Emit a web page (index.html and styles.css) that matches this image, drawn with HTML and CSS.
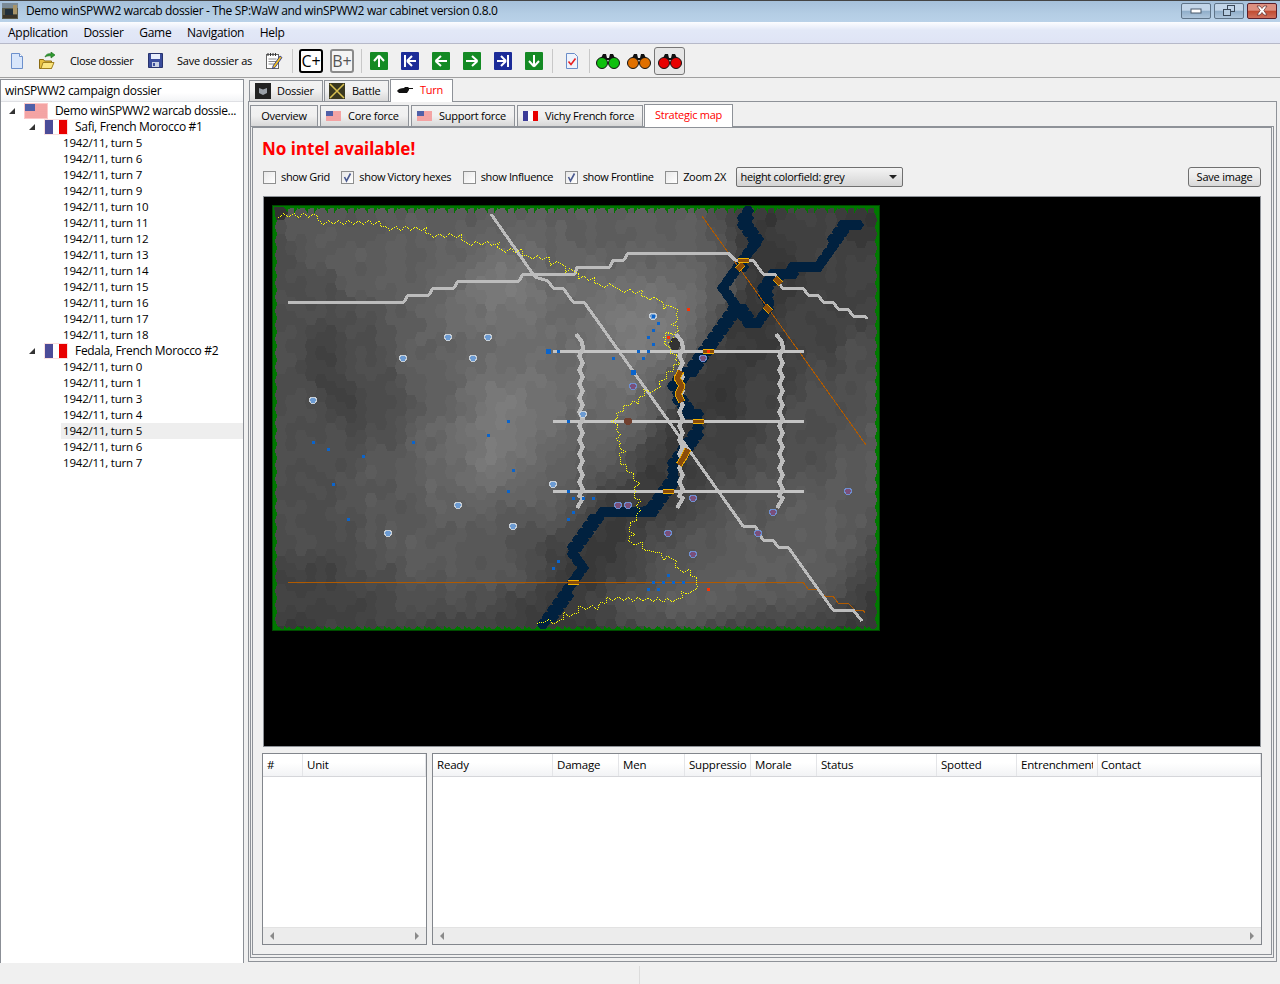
FILE: index.html
```html
<!DOCTYPE html>
<html lang="en">
<head>
<meta charset="utf-8">
<title>Demo winSPWW2 warcab dossier</title>
<link rel="stylesheet" href="styles.css">
</head>
<body>
<div class="window">
  <header class="titlebar">
    <svg class="app-icon" width="16" height="16" viewBox="0 0 16 16"><rect width="16" height="16" fill="#5a5a48"/><rect y="0" width="16" height="5" fill="#7a8a96"/><rect x="3" y="6" width="8" height="6" fill="#22303a"/><rect x="11" y="2" width="4" height="9" fill="#a89468"/><rect x="1" y="12" width="14" height="3" fill="#3a3428"/></svg>
    <span class="title-text">Demo winSPWW2 warcab dossier - The SP:WaW and winSPWW2 war cabinet version 0.8.0</span>
    <div class="win-buttons">
      <span class="win-btn"><svg width="12" height="6" viewBox="0 0 12 6"><rect x="1" y="1" width="10" height="4" fill="#fff" stroke="#48586a"/></svg></span>
      <span class="win-btn"><svg width="14" height="12" viewBox="0 0 14 12"><rect x="5.5" y="0.5" width="7" height="6" fill="none" stroke="#3a4858"/><rect x="1.5" y="4.5" width="7" height="6" fill="#b6cce0" stroke="#3a4858"/></svg></span>
      <span class="win-btn win-close"><svg width="14" height="11" viewBox="0 0 14 11"><path d="M2 1h3l2 2.500L9 1h3L8.800 5.500 12 10H9L7 7.500 5 10H2l3.200-4.500z" fill="#fff" stroke="#5a2a2a" stroke-width=".7"/></svg></span>
    </div>
  </header>
  <nav class="menubar">
    <span class="menu-item">Application</span>
    <span class="menu-item">Dossier</span>
    <span class="menu-item">Game</span>
    <span class="menu-item">Navigation</span>
    <span class="menu-item">Help</span>
  </nav>
  <div class="toolbar">
    <span class="tool tool-new"><svg width="14" height="16" viewBox="0 0 14 16"><path d="M1.500.5h8l3 3v12h-11z" fill="#d8e6fb" stroke="#6c90cc"/><path d="M9.500.5v3h3" fill="#fff" stroke="#6c90cc"/></svg></span>
    <span class="tool tool-open"><svg width="18" height="18" viewBox="0 0 18 18"><path d="M1.500 7.500h4l1 1.500h7v7.500h-12z" fill="#e8c040" stroke="#8a6a10"/><path d="M3 16.500l2-6h11l-2.500 6z" fill="#fbe680" stroke="#a08020"/><path d="M7 5c1-3 4-4 6-3V0l4 3-4 3V4c-2-.5-4 0-6 1z" fill="#2e9a30" stroke="#176a1a" stroke-width=".6"/></svg></span>
    <span class="tool-text tool-close-text">Close dossier</span>
    <span class="tool tool-save"><svg width="15" height="15" viewBox="0 0 15 15"><path d="M.5.500h14v14h-14z" fill="#3a4c9c" stroke="#28346e"/><rect x="3" y="1" width="9" height="5" fill="#e8eefc"/><rect x="4" y="9" width="7" height="5" fill="#c8d0e4"/><rect x="5" y="10" width="2" height="3" fill="#3a4c9c"/></svg></span>
    <span class="tool-text tool-saveas-text">Save dossier as</span>
    <span class="tool tool-edit"><svg width="18" height="18" viewBox="0 0 18 18"><rect x="1.500" y="2.500" width="12" height="14" fill="#fff" stroke="#666"/><path d="M3 1v3M5.500 1v3M8 1v3M10.500 1v3" stroke="#333"/><path d="M3.500 7h8M3.500 9.500h8M3.500 12h6" stroke="#8a8a8a"/><path d="M8 14l7-10 2 1.500L10 15.500l-2.500 1z" fill="#f0c020" stroke="#1a2a90" stroke-width=".8"/></svg></span>
    <span class="tool-sep sep-a"></span>
    <span class="key-btn key-c">C+</span>
    <span class="key-btn key-b">B+</span>
    <span class="tool-sep sep-b"></span>
    <span class="nav-icons">
      <svg width="18" height="18" viewBox="0 0 18 18"><rect width="18" height="18" rx="1" fill="#148a24"/><path d="M9 3.500l5 5.500M9 3.500L4 9M9 3.500V15" stroke="#fff" stroke-width="2" fill="none"/></svg>
      <svg width="18" height="18" viewBox="0 0 18 18"><rect width="18" height="18" rx="1" fill="#1c2c98"/><path d="M4 3v12M6 9h9M6 9l5-5M6 9l5 5" stroke="#fff" stroke-width="2" fill="none"/></svg>
      <svg width="18" height="18" viewBox="0 0 18 18"><rect width="18" height="18" rx="1" fill="#148a24"/><path d="M3.500 9H15M3.500 9L9 4M3.500 9L9 14" stroke="#fff" stroke-width="2" fill="none"/></svg>
      <svg width="18" height="18" viewBox="0 0 18 18"><rect width="18" height="18" rx="1" fill="#148a24"/><path d="M14.500 9H3M14.500 9L9 4M14.500 9L9 14" stroke="#fff" stroke-width="2" fill="none"/></svg>
      <svg width="18" height="18" viewBox="0 0 18 18"><rect width="18" height="18" rx="1" fill="#1c2c98"/><path d="M14 3v12M12 9H3M12 9L7 4M12 9l-5 5" stroke="#fff" stroke-width="2" fill="none"/></svg>
      <svg width="18" height="18" viewBox="0 0 18 18"><rect width="18" height="18" rx="1" fill="#148a24"/><path d="M9 14.500L14 9M9 14.500L4 9M9 14.500V3" stroke="#fff" stroke-width="2" fill="none"/></svg>
    </span>
    <span class="tool-sep sep-c"></span>
    <span class="tool tool-report"><svg width="14" height="16" viewBox="0 0 14 16"><path d="M1.500.5h8l3 3v12h-11z" fill="#eef3fc" stroke="#6a8cc8"/><path d="M3.500 8.500l2.500 3 4.500-6" stroke="#e82020" stroke-width="1.600" fill="none"/></svg></span>
    <span class="tool-sep sep-d"></span>
    <span class="binos">
      <span class="bino"><svg width="24" height="16" viewBox="0 0 24 16"><path d="M4 7l3-6h3l1 4h2l1-4h3l3 6z" fill="#111"/><circle cx="6" cy="10" r="5.500" fill="#0ec00e" stroke="#111"/><circle cx="18" cy="10" r="5.500" fill="#0ec00e" stroke="#111"/></svg></span>
      <span class="bino"><svg width="24" height="16" viewBox="0 0 24 16"><path d="M4 7l3-6h3l1 4h2l1-4h3l3 6z" fill="#111"/><circle cx="6" cy="10" r="5.500" fill="#e07000" stroke="#111"/><circle cx="18" cy="10" r="5.500" fill="#e07000" stroke="#111"/></svg></span>
      <span class="bino bino-on"><svg width="24" height="16" viewBox="0 0 24 16"><path d="M4 7l3-6h3l1 4h2l1-4h3l3 6z" fill="#111"/><circle cx="6" cy="10" r="5.500" fill="#e80000" stroke="#111"/><circle cx="18" cy="10" r="5.500" fill="#e80000" stroke="#111"/></svg></span>
    </span>
  </div>

  <main class="workspace">
    <aside class="tree-panel">
      <div class="tree-head">winSPWW2 campaign dossier</div>
      <ul class="tree">
        <li class="row root"><i class="twist"></i>
          <svg class="flag-l" width="24" height="16" viewBox="0 0 24 16"><rect width="24" height="16" fill="#fcc8c8"/><rect x="1" y="1" width="22" height="14" fill="#fff"/><path d="M1 2h22M1 4h22M1 6h22M1 8h22M1 10h22M1 12h22M1 14h22" stroke="#e84848" stroke-width="1"/><rect x="1" y="1" width="10" height="7" fill="#5060a8"/></svg>
          <span>Demo winSPWW2 warcab dossie...</span></li>
        <li class="row mission"><i class="twist"></i>
          <svg class="flag-f" width="24" height="16" viewBox="0 0 24 16"><rect width="24" height="16" fill="#fbe0e0"/><rect x="1" y="1" width="8" height="14" fill="#4c4c98"/><rect x="9" y="1" width="6" height="14" fill="#fff"/><rect x="15" y="1" width="8" height="14" fill="#e80000"/></svg>
          <span>Safi, French Morocco #1</span></li>
        <li class="row leaf">1942/11, turn 5</li>
        <li class="row leaf">1942/11, turn 6</li>
        <li class="row leaf">1942/11, turn 7</li>
        <li class="row leaf">1942/11, turn 9</li>
        <li class="row leaf">1942/11, turn 10</li>
        <li class="row leaf">1942/11, turn 11</li>
        <li class="row leaf">1942/11, turn 12</li>
        <li class="row leaf">1942/11, turn 13</li>
        <li class="row leaf">1942/11, turn 14</li>
        <li class="row leaf">1942/11, turn 15</li>
        <li class="row leaf">1942/11, turn 16</li>
        <li class="row leaf">1942/11, turn 17</li>
        <li class="row leaf">1942/11, turn 18</li>
        <li class="row mission"><i class="twist"></i>
          <svg class="flag-f" width="24" height="16" viewBox="0 0 24 16"><rect width="24" height="16" fill="#fbe0e0"/><rect x="1" y="1" width="8" height="14" fill="#4c4c98"/><rect x="9" y="1" width="6" height="14" fill="#fff"/><rect x="15" y="1" width="8" height="14" fill="#e80000"/></svg>
          <span>Fedala, French Morocco #2</span></li>
        <li class="row leaf">1942/11, turn 0</li>
        <li class="row leaf">1942/11, turn 1</li>
        <li class="row leaf">1942/11, turn 3</li>
        <li class="row leaf">1942/11, turn 4</li>
        <li class="row leaf current"><span>1942/11, turn 5</span></li>
        <li class="row leaf">1942/11, turn 6</li>
        <li class="row leaf">1942/11, turn 7</li>
      </ul>
    </aside>

    <section class="right-col">
      <div class="tabs outer-tabs">
        <span class="tab tab-dossier"><svg width="16" height="16" viewBox="0 0 16 16"><rect width="16" height="16" fill="#222"/><path d="M4 5l4 1.500L12 5v5l-4 2-4-2z" fill="#9aa0a8"/></svg>Dossier</span>
        <span class="tab tab-battle"><svg width="16" height="16" viewBox="0 0 16 16"><rect width="16" height="16" fill="#3a3820"/><path d="M1 1l14 14M15 1L1 15" stroke="#d8c050" stroke-width="1.500"/></svg>Battle</span>
        <span class="tab tab-turn active"><svg width="16" height="8" viewBox="0 0 16 8"><path d="M0 5c1-2 4-3 7-3l1-1h3l1 1h4v1h-4v1l-2 3H2z" fill="#111"/></svg>Turn</span>
      </div>
      <div class="outer-pane">
        <div class="tabs inner-tabs">
          <span class="tab tab-overview">Overview</span>
          <span class="tab tab-core"><svg width="15" height="10" viewBox="0 0 15 10"><rect width="15" height="10" fill="#fff"/><path d="M0 1h15M0 3h15M0 5h15M0 7h15M0 9h15" stroke="#e84848"/><rect width="7" height="5" fill="#5060a8"/></svg>Core force</span>
          <span class="tab tab-support"><svg width="15" height="10" viewBox="0 0 15 10"><rect width="15" height="10" fill="#fff"/><path d="M0 1h15M0 3h15M0 5h15M0 7h15M0 9h15" stroke="#e84848"/><rect width="7" height="5" fill="#5060a8"/></svg>Support force</span>
          <span class="tab tab-vichy"><svg width="15" height="10" viewBox="0 0 15 10"><rect width="5" height="10" fill="#3c3c98"/><rect x="5" width="5" height="10" fill="#fff"/><rect x="10" width="5" height="10" fill="#e80000"/></svg>Vichy French force</span>
          <span class="tab tab-map active">Strategic map</span>
        </div>
        <div class="inner-pane">
          <div class="content">
            <h1 class="no-intel">No intel available!</h1>
            <div class="controls">
              <label class="check"><span class="box"></span>show Grid</label>
              <label class="check"><span class="box on"><svg width="11" height="11" viewBox="0 0 11 11"><path d="M2.500 5l2 4 4-7.500" fill="none" stroke="#4a5a90" stroke-width="1.600"/></svg></span>show Victory hexes</label>
              <label class="check"><span class="box"></span>show Influence</label>
              <label class="check"><span class="box on"><svg width="11" height="11" viewBox="0 0 11 11"><path d="M2.500 5l2 4 4-7.500" fill="none" stroke="#4a5a90" stroke-width="1.600"/></svg></span>show Frontline</label>
              <label class="check"><span class="box"></span>Zoom 2X</label>
              <span class="select">height colorfield: grey<i class="select-arrow"></i></span>
              <span class="button">Save image</span>
            </div>
            <div class="stage"><svg id="map" class="map" width="609" height="427" viewBox="272 205 609 427" shape-rendering="crispEdges"></svg></div>
            <div class="tables">
              <div class="table table-units">
                <div class="thead"><span class="th w-num">#</span><span class="th w-unit">Unit</span></div>
                <div class="tbody"></div>
                <div class="hscroll"><i class="arr-l"></i><i class="arr-r"></i></div>
              </div>
              <div class="table table-data">
                <div class="thead">
                  <span class="th w-ready">Ready</span><span class="th w-66">Damage</span><span class="th w-66">Men</span><span class="th w-66">Suppressio</span><span class="th w-66">Morale</span><span class="th w-status">Status</span><span class="th w-80">Spotted</span><span class="th w-entr">Entrenchment</span><span class="th w-contact">Contact</span>
                </div>
                <div class="tbody"></div>
                <div class="hscroll"><i class="arr-l"></i><i class="arr-r"></i></div>
              </div>
            </div>
          </div>
        </div>
      </div>
    </section>
  </main>
  <footer class="statusbar"><span class="status-sep"></span></footer>
</div>
<script src="map.js"></script>
</body>
</html>
```
FILE: styles.css
```css
* { box-sizing: border-box; }
html, body { margin: 0; padding: 0; }
body { width: 1280px; height: 984px; overflow: hidden; background: #f0f0f0; color: #000;
  font: 12px/16px "Open Sans", "Noto Sans", "Liberation Sans", sans-serif; letter-spacing: -0.2px; }
ul { list-style: none; margin: 0; padding: 0; }
.window { display: flex; flex-direction: column; height: 984px; }

.titlebar { height: 22px; flex: none; display: flex; align-items: center; padding-left: 2px; padding-bottom: 2px;
  border-top: 1px solid #444; background: linear-gradient(#a5c0da, #b4cde4 60%, #b9d1e8); }
.app-icon { margin-right: 8px; }
.title-text { white-space: nowrap; letter-spacing: -0.345px; }
.win-buttons { margin-left: auto; display: flex; gap: 3px; padding-right: 3px; }
.win-btn { width: 30px; height: 16px; display: flex; align-items: center; justify-content: center;
  border: 1px solid #5f7488; border-radius: 2px; background: linear-gradient(#c2d5e8 45%, #8fadc9 50%, #aec6dc); }
.win-close { border-color: #5a1f2a; background: linear-gradient(#dc9080 45%, #c04a30 50%, #d0705c); }

.menubar { height: 22px; flex: none; display: flex; align-items: center; padding-left: 8px; gap: 15.5px;
  letter-spacing: -0.25px; border-bottom: 1px solid #b6b9c9; background: linear-gradient(#fcfdff, #e2e8f7 40%, #dfe4f5); }

.toolbar { height: 34px; flex: none; display: flex; align-items: center; position: relative;
  border-bottom: 1px solid #a0a0a0; background: #f0f0f0; }
.tool { display: flex; align-items: center; justify-content: center; flex: none; }
.tool-new { margin-left: 10px; }
.tool-open { margin-left: 14px; }
.tool-close-text { margin-left: 14px; width: 65px; letter-spacing: -0.35px; }
.tool-save { margin-left: 13px; }
.tool-saveas-text { margin-left: 14px; width: 76px; }
.tool-edit { margin-left: 12px; }
.tool-text { white-space: nowrap; flex: none; font-size: 11px; }
.tool-sep { width: 1px; height: 24px; background: #c8c8c8; flex: none; }
.sep-a { margin-left: 9px; }
.key-btn { width: 24px; height: 24px; flex: none; display: flex; align-items: center; justify-content: center;
  font: 16px/20px "Open Sans", sans-serif; letter-spacing: 0; border-radius: 3px; }
.key-c { margin-left: 6px; border: 2px solid #000; background: #fff; }
.key-b { margin-left: 7px; border: 2px solid #8a8a8a; color: #555; background: #f4f4f4; }
.sep-b { margin-left: 7px; }
.nav-icons { display: flex; gap: 13px; margin-left: 8px; flex: none; }
.nav-icons svg { display: block; }
.sep-c { margin-left: 9px; }
.tool-report { margin-left: 12px; }
.sep-d { margin-left: 10px; }
.binos { display: flex; margin-left: 2px; gap: 0; flex: none; }
.bino { width: 31px; height: 28px; display: flex; align-items: center; justify-content: center; }
.bino-on { border: 1px solid #777; border-radius: 3px; background: #e6e6e6; }

.workspace { flex: 1; display: flex; min-height: 0; padding-top: 1px; }
.tree-panel { width: 244px; height: 885px; flex: none; background: #fff; border: 1px solid #8b8f96; }
.tree-head { height: 22px; line-height: 21px; padding-left: 4px; letter-spacing: -0.3px; border-bottom: 1px solid #dfe0e4;
  background: linear-gradient(#fff 60%, #f3f4f6); }
.tree { padding-top: 1px; }
.row { height: 16px; display: flex; align-items: center; white-space: nowrap; }
.twist { width: 0; height: 0; flex: none; border-style: solid; border-width: 0 0 6px 6px;
  border-color: transparent transparent #333 transparent; }
.root { padding-left: 8px; letter-spacing: -0.35px; }
.root .flag-l { margin: 0 7px 0 9px; }
.mission { padding-left: 28px; letter-spacing: -0.3px; }
.mission .flag-f { margin: 0 7px 0 9px; }
.leaf { padding-left: 62px; font-size: 11.5px; }
.current { padding-left: 60px; }
.current span { flex: 1; padding-left: 2px; background: #eeeeee; }

.right-col { flex: 1; margin-left: 4px; display: flex; flex-direction: column; min-width: 0; margin-right: 3px; height: 883px; }
.tabs { display: flex; flex: none; align-items: flex-end; font-size: 11px; letter-spacing: -0.27px; }
.outer-tabs { height: 22px; padding-left: 1px; gap: 1px; }
.tab { display: flex; align-items: center; gap: 7px; height: 21px; white-space: nowrap;
  border: 1px solid #8e9298; border-bottom: 0; background: linear-gradient(#f2f2f2, #f0f0f0 50%, #d8d8d8); padding-bottom: 1px; }
.tab.active { height: 23px; background: #fff; color: #f00; margin-bottom: -1px; position: relative; z-index: 1; padding-bottom: 3px; }
.tab-dossier { width: 74px; padding-left: 5px; gap: 6px; }
.tab-battle { width: 65px; padding-left: 4px; }
.tab-turn { width: 63px; padding-left: 6px; }
.outer-pane { flex: 1; border: 1px solid #8e9298; padding: 1px 2px 3px 1px; display: flex; flex-direction: column; min-height: 0; background: #f0f0f0; }
.inner-tabs { height: 23px; gap: 2px; }
.tab-overview { width: 68px; justify-content: center; }
.tab-core { width: 89px; padding-left: 5px; }
.tab-support { width: 104px; padding-left: 5px; }
.tab-vichy { width: 126px; padding-left: 5px; margin-right: -1px; }
.tab-map { width: 89px; justify-content: center; }
.inner-pane { flex: 1; border: 1px solid #8e9298; padding: 0 1px 2px 0; min-height: 0; display: flex; }
.content { flex: 1; border: 1px solid #8e9298; margin-left: 1px; padding: 0 10px 9px 9px; display: flex; flex-direction: column; min-width: 0; }
.no-intel { margin: 9px 0 0 0; height: 24px; flex: none; color: #f00; font: bold 17px/24px "Noto Sans", "Open Sans", sans-serif; letter-spacing: 0; }
.controls { display: flex; align-items: center; flex: none; height: 22px; margin-top: 5px; gap: 11.5px; padding-left: 1px; font-size: 11px; letter-spacing: -0.35px; }
.check { display: flex; align-items: center; gap: 5px; white-space: nowrap; }
.box { width: 13px; height: 13px; flex: none; display: flex; align-items: center; justify-content: center;
  border: 1px solid #8e8f8f; background: linear-gradient(135deg, #e8e8e8, #fff); }
.select { width: 167px; height: 20px; margin-left: -1px; display: flex; align-items: center; padding-left: 3px; letter-spacing: -0.3px;
  border: 1px solid #707070; border-radius: 2px; background: linear-gradient(#f4f4f4, #e4e4e4 50%, #d4d4d4); white-space: nowrap; }
.select-arrow { margin-left: auto; margin-right: 5px; width: 0; height: 0;
  border-left: 4px solid transparent; border-right: 4px solid transparent; border-top: 4px solid #222; }
.button { margin-left: auto; width: 73px; height: 20px; display: flex; align-items: center; justify-content: center; letter-spacing: -0.2px;
  border: 1px solid #707070; border-radius: 3px; background: linear-gradient(#f4f4f4, #ececec 50%, #d8d8d8); white-space: nowrap; }
.stage { height: 551px; margin: 8px 0 0 1px; flex: none; background: #000; border: 1px solid #8e9298; padding: 8px 0 0 8px; }
.map { display: block; }
.tables { flex: 1; display: flex; gap: 5px; margin: 6px -1px 0 0; min-height: 0; font-size: 11.5px; }
.table { display: flex; flex-direction: column; border: 1px solid #82868c; background: #fff; min-width: 0; }
.table-units { width: 165px; flex: none; }
.table-data { flex: 1; }
.thead { height: 23px; flex: none; display: flex; border-bottom: 1px solid #d5d6da; background: linear-gradient(#fff 40%, #f2f3f5); overflow: hidden; }
.th { padding-left: 4px; line-height: 22px; white-space: nowrap; overflow: hidden; border-right: 1px solid #e4e5e8; flex: none; }
.w-num { width: 40px; }
.w-unit { width: 123px; }
.w-ready { width: 120px; }
.w-66 { width: 66px; }
.w-status { width: 120px; }
.w-80 { width: 80px; }
.w-entr { width: 76px; margin-right: 4px; border-right: 0; }
.w-contact { flex: 1; border-left: 1px solid #e4e5e8; padding-left: 3px; }
.tbody { flex: 1; background: #fff; }
.hscroll { height: 17px; flex: none; display: flex; align-items: center; justify-content: space-between; padding: 0 7px;
  background: #ececec; border-top: 1px solid #e2e2e2; }
.arr-l, .arr-r { width: 0; height: 0; border-top: 4px solid transparent; border-bottom: 4px solid transparent; }
.arr-l { border-right: 4px solid #8a8a8a; }
.arr-r { border-left: 4px solid #8a8a8a; }

.statusbar { height: 21px; flex: none; display: flex; background: #f0f0f0; padding-left: 639px; }
.status-sep { width: 1px; height: 18px; margin-top: 3px; background: #dcdcdc; }
```
FILE: map.js
```js
(function () {
  var NS = "http://www.w3.org/2000/svg";
  var svg = document.getElementById("map");
  function el(name, attrs) {
    var e = document.createElementNS(NS, name);
    for (var k in attrs) e.setAttribute(k, attrs[k]);
    svg.appendChild(e);
    return e;
  }
  function pts(a) { return a.map(function (p) { return p[0] + "," + p[1]; }).join(" "); }
  function line(a, color, width) {
    return el("polyline", { points: pts(a), fill: "none", stroke: color, "stroke-width": width, "stroke-linejoin": "round" });
  }
  // Walk a polyline, calling fn at every `step` pixels.
  function walk(a, step, fn) {
    var rest = 0;
    for (var i = 0; i < a.length - 1; i++) {
      var dx = a[i + 1][0] - a[i][0], dy = a[i + 1][1] - a[i][1], len = Math.sqrt(dx * dx + dy * dy);
      var d = rest;
      while (d < len) { fn(a[i][0] + dx * d / len, a[i][1] + dy * d / len); d += step; }
      rest = d - len;
    }
  }

  // Height field sampled every 20px x 28.3px, digits are brightness levels.
  var H = [
    "3444444444455555555544322122211",
    "3444445555566665555555421122211",
    "3344555566788766666666531112222",
    "3333445567899877788887531112222",
    "3333334567788877899997411122222",
    "3322334556677777889985211122233",
    "3322333556788877888641112223333",
    "3332233456899887777531112233334",
    "3333333567899876665311222333344",
    "3333344567898765543112223333444",
    "3333444566776654322122334444444",
    "3333344455554443211223344455544",
    "3333344544443322112334455555543",
    "2222333444444321122344555555432",
    "2222223333332211234455544443321",
    "1112222222222111122333222222111"
  ];
  var TONE = [48, 56, 66, 78, 88, 94, 100, 107, 114, 122];
  function tone(v) {
    var i = Math.min(8, Math.floor(v));
    return TONE[i] + (TONE[i + 1] - TONE[i]) * (v - i);
  }
  function sample(x, y) {
    var fx = Math.max(0, Math.min(29.999, (x - 273) / 20));
    var fy = Math.max(0, Math.min(14.999, (y - 206) / 28.3));
    var i = Math.floor(fx), j = Math.floor(fy), u = fx - i, v = fy - j;
    function g(a, b) { return +H[b].charAt(a); }
    return (g(i, j) * (1 - u) + g(i + 1, j) * u) * (1 - v) + (g(i, j + 1) * (1 - u) + g(i + 1, j + 1) * u) * v;
  }
  function noise(i, j) {
    var s = Math.sin(i * 12.9898 + j * 78.233) * 43758.5453;
    return s - Math.floor(s);
  }

  el("rect", { x: 272.5, y: 205.5, width: 607, height: 425, fill: "#007800", stroke: "#004a00" });

  // Terrain hexes, 10px column step, 14px row step.
  var hw = 6.67, hq = 3.33, hh = 7;
  for (var c = 0; c < 60; c++) {
    for (var r = -1; r < 32; r++) {
      var cx = 281 + c * 10, cy = 213 + r * 14 + (c % 2 ? 7 : 0);
      var v = sample(cx, cy);
      var level = tone(v) + (noise(c, r) - 0.5) * 7;
      var gray = Math.round(Math.max(44, Math.min(136, Math.round(level / 4) * 4)));
      var top = Math.max(cy - hh, 208), bot = Math.min(cy + hh, 629);
      if (top >= bot) continue;
      var rightX = Math.min(cx + hw, 878);
      var poly = [[cx - hw, cy], [cx - hq, top], [cx + hq, top], [rightX, cy], [cx + hq, bot], [cx - hq, bot]];
      if (cy < 208 || cy > 629) {
        poly = [[cx - hq, top], [cx + hq, top], [cx + hq, bot], [cx - hq, bot]];
      }
      el("polygon", { points: pts(poly), fill: "rgb(" + gray + "," + gray + "," + gray + ")" });
    }
  }
  // Fine green scallops along the top and bottom edges.
  var tops = [], bots = [];
  for (var x = 274; x < 879; x += 10) {
    tops.push([x, 206], [x + 5, 209]);
    bots.push([x, 630], [x + 5, 627]);
  }
  tops.push([879, 206]); bots.push([879, 630]);
  el("polygon", { points: pts(tops), fill: "#007800" });
  el("polygon", { points: pts(bots), fill: "#007800" });
  el("polygon", { points: "274,207 284,207 288,213 284,220 276,220", fill: "#333" });
  el("polygon", { points: "669,344 672,338 678,338 681,344 678,350 672,350", fill: "#333" });

  // Rivers: a solid core, stamped with small hexes on the 5x7 grid for the stepped edge.
  function river(a) {
    line(a, "#01213f", 9);
    var seen = {};
    walk(a, 3, function (px, py) {
      var sx = Math.round((px - 3) / 5) * 5 + 3, sy = Math.round((py - 1) / 7) * 7 + 1;
      var key = sx + ":" + sy;
      if (seen[key]) return;
      seen[key] = 1;
      el("polygon", { points: pts([[sx - 6, sy], [sx - 3, sy - 5], [sx + 3, sy - 5], [sx + 6, sy], [sx + 3, sy + 5], [sx - 3, sy + 5]]), fill: "#01213f" });
    });
  }
  river([[748, 212], [743, 220], [753, 233], [757, 243], [747, 255], [740, 265], [730, 277], [723, 288], [733, 303], [740, 310], [748, 322], [758, 322], [765, 313], [770, 303], [763, 288], [773, 278], [783, 275], [797, 268], [808, 267], [818, 267], [827, 255], [837, 240], [847, 225], [858, 225]]);
  river([[733, 310], [727, 322], [717, 337], [703, 353], [693, 372], [680, 376], [675, 385], [685, 407], [697, 417], [698, 428], [693, 442], [673, 467], [673, 483], [660, 500], [653, 508], [640, 512], [603, 512], [593, 523], [580, 540], [573, 553], [583, 567], [570, 587], [560, 603], [545, 622]]);

  // Railway
  var RAIL = "#b05a00";
  line([[702, 216], [866, 445]], RAIL, 1);
  line([[288, 582], [803, 582], [808, 589], [817, 589], [825, 596], [833, 596], [838, 603], [848, 603], [855, 610], [863, 610], [865, 613]], RAIL, 1);

  // Roads
  var ROAD = "#bcbcbc";
  line([[288, 302], [404, 302], [408, 295], [429, 295], [433, 288], [454, 288], [458, 281], [519, 281], [523, 274], [575, 274], [577, 267], [610, 267], [613, 260], [624, 260], [628, 253], [728, 253], [735, 260], [753, 260], [763, 274], [775, 274], [782, 288], [803, 288], [808, 295], [818, 295], [823, 302], [833, 302], [838, 309], [848, 309], [853, 316], [865, 316], [867, 319]], ROAD, 3);
  line([[491, 214], [535, 277], [548, 281], [553, 288], [563, 288], [573, 302], [584, 302], [743, 526], [755, 526], [763, 540], [773, 540], [778, 547], [788, 547], [833, 610], [853, 610], [862, 621]], ROAD, 3);
  [351.5, 421.5, 491.5].forEach(function (y) { line([[553, y], [804, y]], "#c4c4c4", 3); });
  [581, 681, 781].forEach(function (x) {
    var w = [[x - 5, 334], [x + 1, 342]];
    var s = 1;
    for (var y = 349; y < 498; y += 7) { w.push([x + (s ? 2 : -2), y]); s = 1 - s; }
    w.push([x + 2, 498], [x - 4, 508]);
    line(w, ROAD, 4);
  });

  // Bridges
  function bridgeLine(a) {
    line(a, "#e8a800", 7);
    line(a, "#8a4d0a", 5);
  }
  function bridgeBox(x, y, w, h) {
    el("rect", { x: x, y: y, width: w, height: h, fill: "#8a4d0a" });
    el("rect", { x: x, y: y, width: w, height: 1, fill: "#f0b000" });
    el("rect", { x: x, y: y + h - 1, width: w, height: 1, fill: "#f0b000" });
  }
  bridgeLine([[743, 264], [737, 270]]);
  bridgeBox(738, 258, 11, 5);
  bridgeLine([[775, 278], [781, 284]]);
  bridgeLine([[765, 306], [771, 312]]);
  bridgeBox(703, 349, 11, 5);
  bridgeLine([[681, 371], [677, 378], [682, 386], [678, 394], [682, 402]]);
  bridgeBox(693, 419, 11, 5);
  bridgeLine([[688, 449], [684, 457], [679, 465]]);
  bridgeBox(663, 489, 11, 5);
  bridgeBox(568, 580, 11, 5);

  // Frontline: zigzagging yellow dots
  var FRONT = [[278, 215], [318, 215], [318, 222], [378, 222], [385, 228], [425, 228], [428, 235], [460, 235], [465, 243], [497, 243], [500, 250], [520, 250], [527, 257], [547, 257], [550, 263], [562, 263], [565, 270], [575, 270], [578, 277], [593, 278], [598, 285], [615, 285], [618, 290], [640, 291], [645, 298], [658, 298], [663, 307], [672, 305], [678, 315], [673, 323], [678, 332], [667, 333], [663, 338], [668, 348], [675, 355], [678, 362], [668, 373], [660, 382], [657, 390], [645, 390], [638, 402], [628, 403], [618, 413], [613, 420], [618, 430], [618, 443], [623, 450], [618, 458], [628, 470], [638, 482], [633, 492], [638, 500], [638, 515], [628, 527], [633, 533], [628, 542], [640, 543], [648, 552], [655, 550], [663, 558], [672, 557], [678, 570], [688, 570], [698, 582], [692, 592], [683, 592], [677, 600], [608, 598], [597, 607], [580, 607], [573, 615], [565, 613], [558, 622], [543, 620], [538, 623], [538, 627]];
  var zig = [], sign = 1;
  for (var i = 0; i < FRONT.length - 1; i++) {
    var a = FRONT[i], b = FRONT[i + 1];
    var dx = b[0] - a[0], dy = b[1] - a[1], len = Math.sqrt(dx * dx + dy * dy);
    var n = Math.max(1, Math.round(len / 5));
    for (var k = 0; k < n; k++) {
      var t = k / n;
      zig.push([a[0] + dx * t - dy / len * sign * 2, a[1] + dy * t + dx / len * sign * 2]);
      sign = -sign;
    }
  }
  function yellow(px, py) {
    el("rect", { x: Math.round(px), y: Math.round(py), width: 1, height: 1, fill: "#ffff00" });
  }
  walk(zig, 2, yellow);
  [[663, 337], [665, 333], [668, 332], [671, 333], [673, 337], [671, 341], [668, 342], [665, 341]].forEach(function (p) { yellow(p[0], p[1]); });

  // Victory hexes
  function vh(p, fill, ring) {
    el("polygon", { points: pts([[p[0] - 4, p[1]], [p[0] - 2, p[1] - 3], [p[0] + 2, p[1] - 3], [p[0] + 4, p[1]], [p[0] + 2, p[1] + 3], [p[0] - 2, p[1] + 3]]), fill: fill, stroke: ring, "stroke-width": 1 });
  }
  [[448, 337], [488, 337], [403, 358], [473, 358], [313, 400], [653, 316], [583, 414], [553, 484], [458, 505], [513, 526], [388, 533]].forEach(function (p) { vh(p, "#6c9bd2", "#c8d0d8"); });
  [[703, 358], [633, 386], [618, 505], [628, 505], [693, 498], [773, 512], [668, 533], [758, 533], [693, 554], [848, 491]].forEach(function (p) { vh(p, "#7a4f7a", "#6f8fd0"); });
  vh([628, 421], "#70402f", "#70402f");

  // Units
  function dot(p, size, color) {
    el("rect", { x: p[0] - Math.floor(size / 2), y: p[1] - Math.floor(size / 2), width: size, height: size, fill: color });
  }
  [[658, 323], [653, 330], [648, 337], [653, 344], [648, 351], [638, 351], [643, 358], [613, 358], [558, 351], [508, 421], [568, 421], [488, 435], [413, 442], [313, 442], [328, 449], [363, 456], [513, 470], [333, 484], [508, 491], [568, 491], [573, 498], [583, 498], [593, 498], [573, 512], [568, 519], [348, 519], [558, 561], [553, 568], [668, 575], [653, 582], [663, 582], [673, 582], [683, 582], [648, 589], [658, 589], [653, 316]].forEach(function (p) { dot(p, 3, "#0a64cc"); });
  dot([633, 372], 5, "#0a64cc");
  dot([548, 351], 5, "#0a64cc");
  [[688, 309], [668, 337], [708, 351], [708, 589]].forEach(function (p) { dot(p, 3, "#ff3000"); });
})();
```
